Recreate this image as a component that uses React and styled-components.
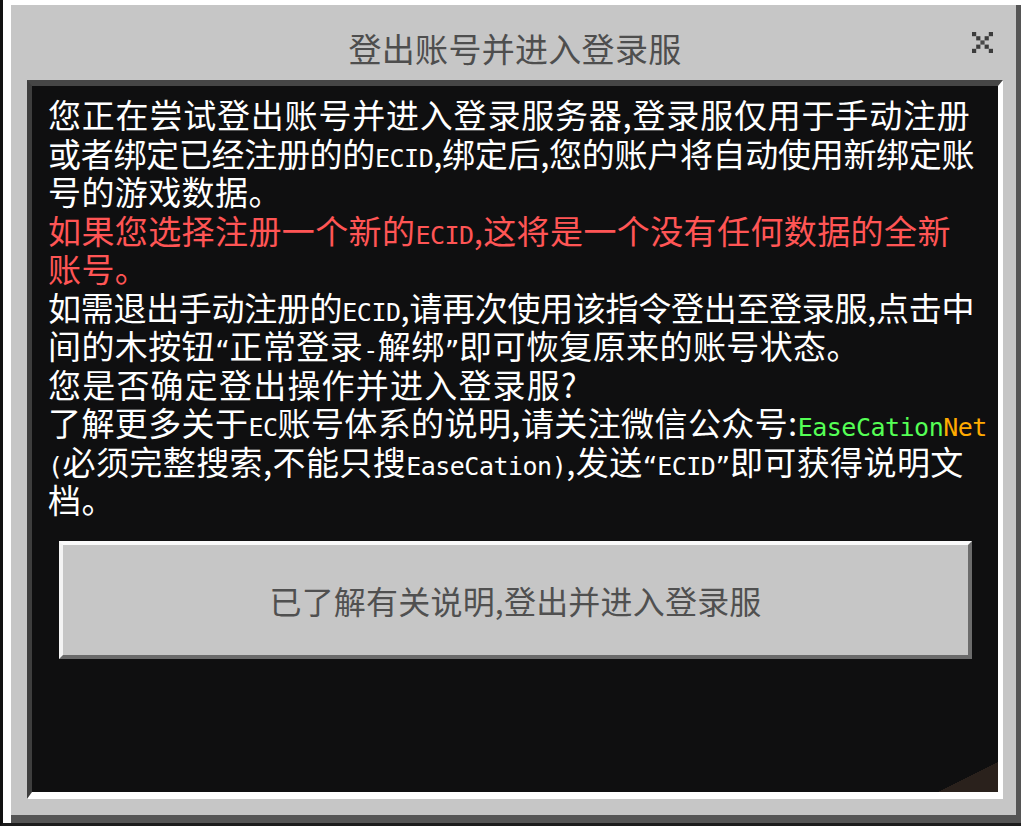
import React from "react";
import styled, { createGlobalStyle } from "styled-components";

const GlobalStyle = createGlobalStyle`
  html, body {
    margin: 0;
    padding: 0;
    background: #fff;
  }
  body {
    font-family: "Noto Sans CJK SC", "Noto Sans", sans-serif;
  }
`;

const Frame = styled.div`
  box-sizing: border-box;
  width: 1021px;
  height: 826px;
  display: flex;
  flex-direction: column;
  padding: 0 18px 24px 24px;
  background: #c6c6c6;
  border-left: 3px solid #111;
  border-bottom: 3px solid #1c1c1c;
  box-shadow: inset 8px 5px 0 #fff, inset -5px -8px 0 #555;
`;

const Header = styled.div`
  height: 80px;
  flex: none;
  display: grid;
  grid-template-columns: 1fr auto 1fr;
  align-items: center;
`;

const Title = styled.h1`
  grid-column: 2;
  margin: 0;
  padding-top: 16px;
  font-size: 33px;
  font-weight: 400;
  line-height: 40px;
  letter-spacing: 0.3px;
  color: #4e4e4e;
  white-space: nowrap;
`;

const Close = styled.button`
  grid-column: 3;
  justify-self: end;
  margin: 5px 10px 0 0;
  padding: 0;
  width: 21px;
  height: 21px;
  border: 0;
  background: transparent;
  cursor: pointer;
  display: flex;
`;

const Panel = styled.div`
  flex: 1;
  display: flex;
  flex-direction: column;
  padding: 9px 16px 0;
  border-style: solid;
  border-width: 6px 5px 7px 5px;
  border-color: #464646 #fff #fff #3e3e3e;
  background:
    linear-gradient(to bottom right, transparent 50%, #2a211c 50%) no-repeat right bottom / 60px 30px,
    #0f0f10;
`;

const Text = styled.p`
  margin: 0;
  font-size: 33px;
  color: #fff;
  white-space: nowrap;
`;

const TONES = {
  white: "#ffffff",
  red: "#ff5555",
  green: "#55ff55",
  gold: "#ffaa00",
};

const Line = styled.span`
  display: block;
  height: 38.5px;
  line-height: 38.5px;
  letter-spacing: ${(p) => (p.track ?? 0.4)}px;
  color: ${(p) => TONES[p.tone || "white"]};
`;

const Run = styled.span`
  color: ${(p) => TONES[p.tone]};
`;

const Lat = styled.span`
  font-family: "DejaVu Sans Mono", "Liberation Mono", monospace;
  font-size: 25px;
  letter-spacing: -0.5px;
`;

const Button = styled.button`
  box-sizing: border-box;
  height: 118px;
  margin: 22px 10px 0 11px;
  border-style: solid;
  border-width: 4px;
  border-color: #fafafa #6c6c6c #6a6a6a #f4f4f4;
  background: #c6c6c6;
  font-family: "Noto Sans CJK SC", "Noto Sans", sans-serif;
  font-size: 32px;
  letter-spacing: 0.2px;
  color: #505050;
  cursor: pointer;
  white-space: nowrap;
`;

// letters, digits, brackets and quotes go to the narrow latin face;
// , : ? stay in the CJK font where they are already narrow
const mixed = (s) =>
  s
    .split(/([A-Za-z0-9()“”\-]+)/)
    .map((part, i) => (i % 2 ? <Lat key={i}>{part}</Lat> : part));

const LINES = [
  { text: "您正在尝试登出账号并进入登录服务器,登录服仅用于手动注册", track: 0.8 },
  { text: "或者绑定已经注册的的ECID,绑定后,您的账户将自动使用新绑定账", track: -0.3 },
  { text: "号的游戏数据。" },
  { text: "如果您选择注册一个新的ECID,这将是一个没有任何数据的全新", tone: "red" },
  { text: "账号。", tone: "red" },
  { text: "如需退出手动注册的ECID,请再次使用该指令登出至登录服,点击中", track: -0.3 },
  { text: "间的木按钮“正常登录-解绑”即可恢复原来的账号状态。" },
  { text: "您是否确定登出操作并进入登录服?", track: 1.2 },
  { text: "了解更多关于EC账号体系的说明,请关注微信公众号:", link: true },
  { text: "(必须完整搜索,不能只搜EaseCation),发送“ECID”即可获得说明文" },
  { text: "档。" },
];

function CloseIcon() {
  // pixel-style X on a 5x5 grid
  const cells = [
    [0, 0], [4, 0],
    [1, 1], [3, 1],
    [2, 2],
    [1, 3], [3, 3],
    [0, 4], [4, 4],
  ];
  return (
    <svg width="21" height="21" viewBox="0 0 21 21">
      {cells.map(([x, y]) => (
        <rect
          key={`${x}-${y}`}
          x={x * 4.2}
          y={y * 4.2}
          width="4.2"
          height="4.2"
          fill={x === 2 ? "#4a4a4a" : "#3c3c3c"}
        />
      ))}
    </svg>
  );
}

export default function App() {
  return (
    <>
      <GlobalStyle />
      <Frame>
        <Header>
          <Title>登出账号并进入登录服</Title>
          <Close aria-label="关闭">
            <CloseIcon />
          </Close>
        </Header>
        <Panel>
          <Text>
            {LINES.map((l, i) => (
              <Line key={i} tone={l.tone} track={l.track}>
                {mixed(l.text)}
                {l.link && (
                  <Lat>
                    <Run tone="green">EaseCation</Run>
                    <Run tone="gold">Net</Run>
                  </Lat>
                )}
              </Line>
            ))}
          </Text>
          <Button>{mixed("已了解有关说明,登出并进入登录服")}</Button>
        </Panel>
      </Frame>
    </>
  );
}
